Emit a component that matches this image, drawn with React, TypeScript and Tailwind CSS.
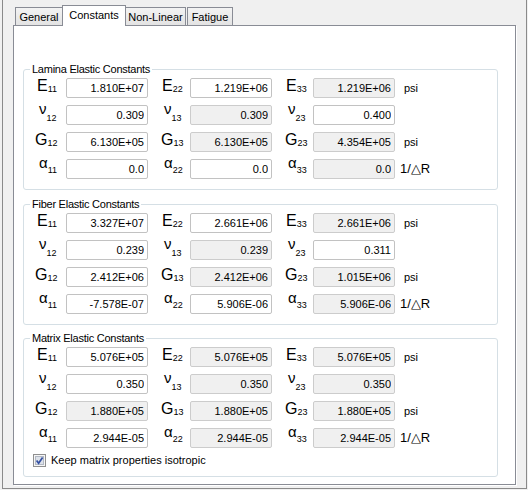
import clsx from "clsx"

type Cell = { v: string; ro?: boolean }
type Row = { sym: "E" | "ν" | "G" | "α"; subs: [string, string, string]; cells: [Cell, Cell, Cell]; unit?: "psi" | "temp" }
type Group = { title: string; rows: Row[] }

const groups: Group[] = [
  {
    title: "Lamina Elastic Constants",
    rows: [
      { sym: "E", subs: ["11", "22", "33"], cells: [{ v: "1.810E+07" }, { v: "1.219E+06" }, { v: "1.219E+06", ro: true }], unit: "psi" },
      { sym: "ν", subs: ["12", "13", "23"], cells: [{ v: "0.309" }, { v: "0.309", ro: true }, { v: "0.400" }] },
      { sym: "G", subs: ["12", "13", "23"], cells: [{ v: "6.130E+05" }, { v: "6.130E+05", ro: true }, { v: "4.354E+05", ro: true }], unit: "psi" },
      { sym: "α", subs: ["11", "22", "33"], cells: [{ v: "0.0" }, { v: "0.0" }, { v: "0.0", ro: true }], unit: "temp" },
    ],
  },
  {
    title: "Fiber Elastic Constants",
    rows: [
      { sym: "E", subs: ["11", "22", "33"], cells: [{ v: "3.327E+07" }, { v: "2.661E+06" }, { v: "2.661E+06", ro: true }], unit: "psi" },
      { sym: "ν", subs: ["12", "13", "23"], cells: [{ v: "0.239" }, { v: "0.239", ro: true }, { v: "0.311" }] },
      { sym: "G", subs: ["12", "13", "23"], cells: [{ v: "2.412E+06" }, { v: "2.412E+06", ro: true }, { v: "1.015E+06", ro: true }], unit: "psi" },
      { sym: "α", subs: ["11", "22", "33"], cells: [{ v: "-7.578E-07" }, { v: "5.906E-06" }, { v: "5.906E-06", ro: true }], unit: "temp" },
    ],
  },
  {
    title: "Matrix Elastic Constants",
    rows: [
      { sym: "E", subs: ["11", "22", "33"], cells: [{ v: "5.076E+05" }, { v: "5.076E+05", ro: true }, { v: "5.076E+05", ro: true }], unit: "psi" },
      { sym: "ν", subs: ["12", "13", "23"], cells: [{ v: "0.350" }, { v: "0.350", ro: true }, { v: "0.350", ro: true }] },
      { sym: "G", subs: ["12", "13", "23"], cells: [{ v: "1.880E+05", ro: true }, { v: "1.880E+05", ro: true }, { v: "1.880E+05", ro: true }], unit: "psi" },
      { sym: "α", subs: ["11", "22", "33"], cells: [{ v: "2.944E-05" }, { v: "2.944E-05", ro: true }, { v: "2.944E-05", ro: true }], unit: "temp" },
    ],
  },
]

// left padding of the label cell, per column and symbol
const labelPad: Record<string, string[]> = {
  E: ["pl-[13px]", "pl-[14px]", "pl-[14px]"],
  G: ["pl-[11px]", "pl-[13px]", "pl-[13px]"],
  "ν": ["pl-[15px]", "pl-[16px]", "pl-[16px]"],
  "α": ["pl-[15px]", "pl-[16px]", "pl-[16px]"],
}
const labelWidth = ["w-[42px]", "w-[42px]", "w-[41px]"]

function Label({ sym, sub, col }: { sym: Row["sym"]; sub: string; col: number }) {
  const greek = sym === "ν" || sym === "α"
  return (
    <div className={clsx("h-[20px] leading-[16px] whitespace-nowrap", labelWidth[col], labelPad[sym][col])}>
      <span className={clsx(greek ? "text-[15px] relative -top-[4px]" : "text-[16px]")}>{sym}</span>
      <span className={clsx("text-[9px] relative", sym === "ν" ? "top-[3px]" : "top-[1px]")}>{sub}</span>
    </div>
  )
}

function Field({ cell }: { cell: Cell }) {
  return (
    <input
      readOnly
      value={cell.v}
      className={clsx(
        "w-[82px] h-[20px] border rounded-[2px] text-right pr-[3px] text-[11px] outline-none",
        cell.ro ? "bg-[#f0f0f0] border-[#cccccc]" : "bg-white border-[#c2c2c2]"
      )}
    />
  )
}

function GroupBox({ group, className, last }: { group: Group; className?: string; last?: boolean }) {
  return (
    <fieldset className={clsx("w-[475px] border border-[#d5dfe5] rounded-[3px] pt-[2px] min-w-0", last ? "pb-[9px]" : "pb-[10px]", className)}>
      <legend className="ml-[6px] px-[2px] text-[11px] leading-[13px] tracking-[-0.25px]">{group.title}</legend>
      <div className="flex flex-col gap-[7px]">
        {group.rows.map((row, i) => (
          <div key={i} className="flex items-start h-[20px]">
            {row.cells.map((cell, c) => (
              <div key={c} className="flex">
                <Label sym={row.sym} sub={row.subs[c]} col={c} />
                <Field cell={cell} />
              </div>
            ))}
            {row.unit === "psi" && <span className="ml-[9px] text-[11px] leading-[20px]">psi</span>}
            {row.unit === "temp" && <span className="ml-[5px] text-[13px] leading-[20px]">1/△R</span>}
          </div>
        ))}
      </div>
      {last && (
        <div className="flex items-center h-[14px] mt-[5px] ml-[9px] gap-[5px]">
          <svg width="13" height="13" viewBox="0 0 13 13">
            <rect x="0.5" y="0.5" width="12" height="12" fill="#f6f6f6" stroke="#8f8f8f" />
            <rect x="2.5" y="2.5" width="8" height="8" fill="#dde2ea" stroke="#b3b9c4" />
            <path d="M3.6 6.4 L5.6 9.2 L9.6 3.4" fill="none" stroke="#3551a3" strokeWidth="1.7" />
          </svg>
          <span className="text-[11px] leading-[14px]">Keep matrix properties isotropic</span>
        </div>
      )}
    </fieldset>
  )
}

const tabs = [
  { label: "General", w: "w-[48px]" },
  { label: "Constants", w: "w-[64px]", active: true },
  { label: "Non-Linear", w: "w-[61px]" },
  { label: "Fatigue", w: "w-[46px]" },
]

export default function App() {
  return (
    <div className="w-[528px] h-[490px] bg-[#f0f0f0] pl-[2px] font-['Liberation_Sans',Arial,sans-serif] text-black">
      <div className="w-[525px] h-[489px] border-l border-r border-b border-[#8a8a8a] pt-[5px] pl-[10px]">
        <div className="flex items-end ml-[2px] h-[20px] relative z-10">
          {tabs.map((t, i) => (
            <div
              key={t.label}
              className={clsx(
                "border-l border-t border-r border-[#898c95] text-[11px] leading-[13px] pt-[3px] text-center whitespace-nowrap",
                t.w,
                t.active ? "h-[21px] -mb-px bg-white" : "h-[18px] bg-gradient-to-b from-[#f3f3f3] to-[#e3e3e3]",
                i === 1 || i === 2 ? "-ml-px" : "",
                i === 3 ? "ml-px" : ""
              )}
            >
              {t.label}
            </div>
          ))}
        </div>
        <div className="w-[503px] h-[460px] border border-[#898c95] bg-white shadow-[1px_1px_0_#ffffff] flex flex-col pl-[9px]">
          <GroupBox group={groups[0]} className="mt-[37px]" />
          <GroupBox group={groups[1]} className="mt-[8px]" />
          <GroupBox group={groups[2]} className="mt-[7px]" last />
        </div>
      </div>
    </div>
  )
}
